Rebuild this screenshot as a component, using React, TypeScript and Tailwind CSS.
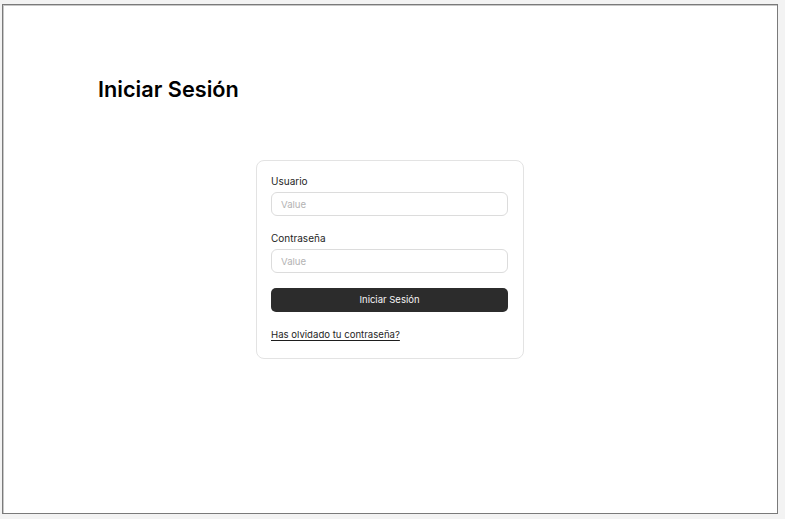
export default function App() {
  return (
    <div className="h-[519px] w-[785px] bg-[#f3f3f3] pl-[2px] pt-[4px] font-['Inter',sans-serif]">
      <div className="flex h-[510px] w-[776px] flex-col border border-[#7a7a7a] bg-white shadow-[inset_1px_1px_0_#c8c8c8]">
        <h1 className="ml-[95px] mt-[71px] text-[21.7px] font-semibold leading-[26px] text-black">
          Iniciar Sesión
        </h1>

        <form className="mx-auto mt-[58px] flex w-[268px] flex-col rounded-[8px] border border-[#e3e3e3] pl-[14px] pr-[15px] pb-[16px] pt-[13px]">
          <label className="text-[10px] leading-[14px] text-[#1e1e1e]">Usuario</label>
          <input
            type="text"
            placeholder="Value"
            className="mt-[4px] h-[24px] rounded-[6px] border border-[#dcdcdc] px-[9px] text-[9.6px] outline-none placeholder:text-[#b3b3b3]"
          />

          <label className="mt-[15px] text-[10px] leading-[14px] text-[#1e1e1e]">Contraseña</label>
          <input
            type="password"
            placeholder="Value"
            className="mt-[4px] h-[24px] rounded-[6px] border border-[#dcdcdc] px-[9px] text-[9.6px] outline-none placeholder:text-[#b3b3b3]"
          />

          <button
            type="button"
            className="mt-[15px] h-[24px] rounded-[5px] bg-[#2c2c2c] text-[9.5px] text-[#f5f5f5]"
          >
            Iniciar Sesión
          </button>

          <a className="mt-[16px] text-[9.6px] leading-[14px] text-[#1e1e1e] underline underline-offset-2">
            Has olvidado tu contraseña?
          </a>
        </form>
      </div>
    </div>
  );
}
